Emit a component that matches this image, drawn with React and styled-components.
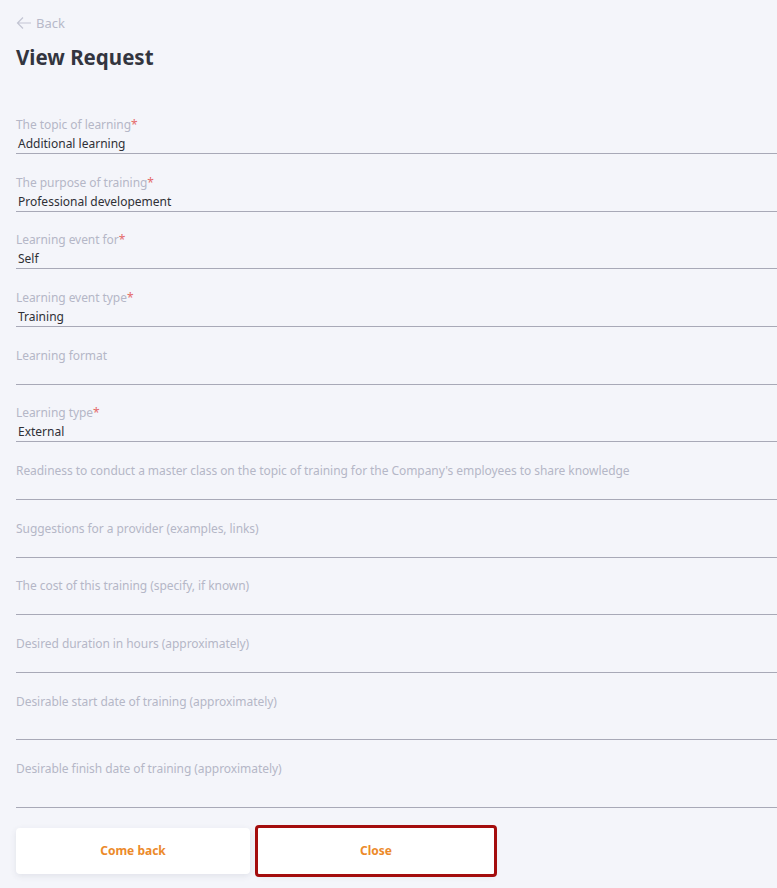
import React from "react";
import styled, { createGlobalStyle } from "styled-components";

const Global = createGlobalStyle`
  html, body { margin: 0; padding: 0; background: #f4f5fa; }
  body { font-family: "Noto Sans", "Open Sans", sans-serif; overflow: hidden; }
  * { box-sizing: border-box; }
`;

const Page = styled.div`
  padding: 13px 0 0 16px;
  min-height: 888px;
  background: #f4f5fa;
`;

const BackLink = styled.a`
  display: inline-flex;
  align-items: center;
  gap: 4px;
  color: #b7b9c9;
  font-size: 13px;
  line-height: 18px;
  text-decoration: none;
  cursor: pointer;
`;

const Title = styled.h1`
  margin: 9px 0 0;
  font-size: 20.5px;
  line-height: 26px;
  font-weight: 700;
  color: #33353f;
`;

const Form = styled.div`
  display: flex;
  flex-direction: column;
  gap: 19.67px;
  margin-top: 46px;
`;

const Field = styled.div`
  display: flex;
  flex-direction: column;
  border-bottom: 1px solid #a8a9b7;
`;

const Label = styled.div`
  font-size: 12px;
  line-height: 18px;
  letter-spacing: -0.06px;
  color: #b5b7c7;
  white-space: nowrap;
`;

const Req = styled.span`
  color: #e46a6a;
`;

const Value = styled.div`
  font-size: 12px;
  line-height: 19px;
  height: ${(p) => (p.$tall ? "28.8px" : "19px")};
  padding-left: 2px;
  color: #2f3036;
`;

const Actions = styled.div`
  display: flex;
  gap: 8px;
  margin-top: 20px;
`;

const Button = styled.button`
  width: ${(p) => (p.$focused ? "236px" : "234px")};
  height: 46px;
  border: none;
  border-radius: ${(p) => (p.$focused ? "1px" : "4px")};
  background: #ffffff;
  box-shadow: 0 2px 6px rgba(60, 64, 90, 0.1);
  color: #ec8a2a;
  font-family: "Noto Sans", sans-serif;
  font-size: 12px;
  font-weight: 700;
  cursor: pointer;
  outline: ${(p) => (p.$focused ? "3px solid #a40d0d" : "none")};
  outline-offset: 0;
`;

const ArrowIcon = () => (
  <svg width="16" height="14" viewBox="0 0 16 14" fill="none" stroke="#c3c5d3" strokeWidth="1.2">
    <path d="M15 7H1.5M7 1.5L1.5 7L7 12.5" />
  </svg>
);

const fields = [
  { label: "The topic of learning", req: true, value: "Additional learning" },
  { label: "The purpose of training", req: true, value: "Professional developement" },
  { label: "Learning event for", req: true, value: "Self" },
  { label: "Learning event type", req: true, value: "Training" },
  { label: "Learning format", req: false, value: "" },
  { label: "Learning type", req: true, value: "External" },
  {
    label:
      "Readiness to conduct a master class on the topic of training for the Company's employees to share knowledge",
    req: false,
    value: "",
  },
  { label: "Suggestions for a provider (examples, links)", req: false, value: "" },
  { label: "The cost of this training (specify, if known)", req: false, value: "" },
  { label: "Desired duration in hours (approximately)", req: false, value: "" },
  { label: "Desirable start date of training (approximately)", req: false, value: "", tall: true },
  { label: "Desirable finish date of training (approximately)", req: false, value: "", tall: true },
];

export default function App() {
  return (
    <Page>
      <Global />
      <BackLink>
        <ArrowIcon />
        Back
      </BackLink>
      <Title>View Request</Title>
      <Form>
        {fields.map((f) => (
          <Field key={f.label}>
            <Label>
              {f.label}
              {f.req && <Req>*</Req>}
            </Label>
            <Value $tall={f.tall}>{f.value}</Value>
          </Field>
        ))}
      </Form>
      <Actions>
        <Button>Come back</Button>
        <Button $focused>Close</Button>
      </Actions>
    </Page>
  );
}
